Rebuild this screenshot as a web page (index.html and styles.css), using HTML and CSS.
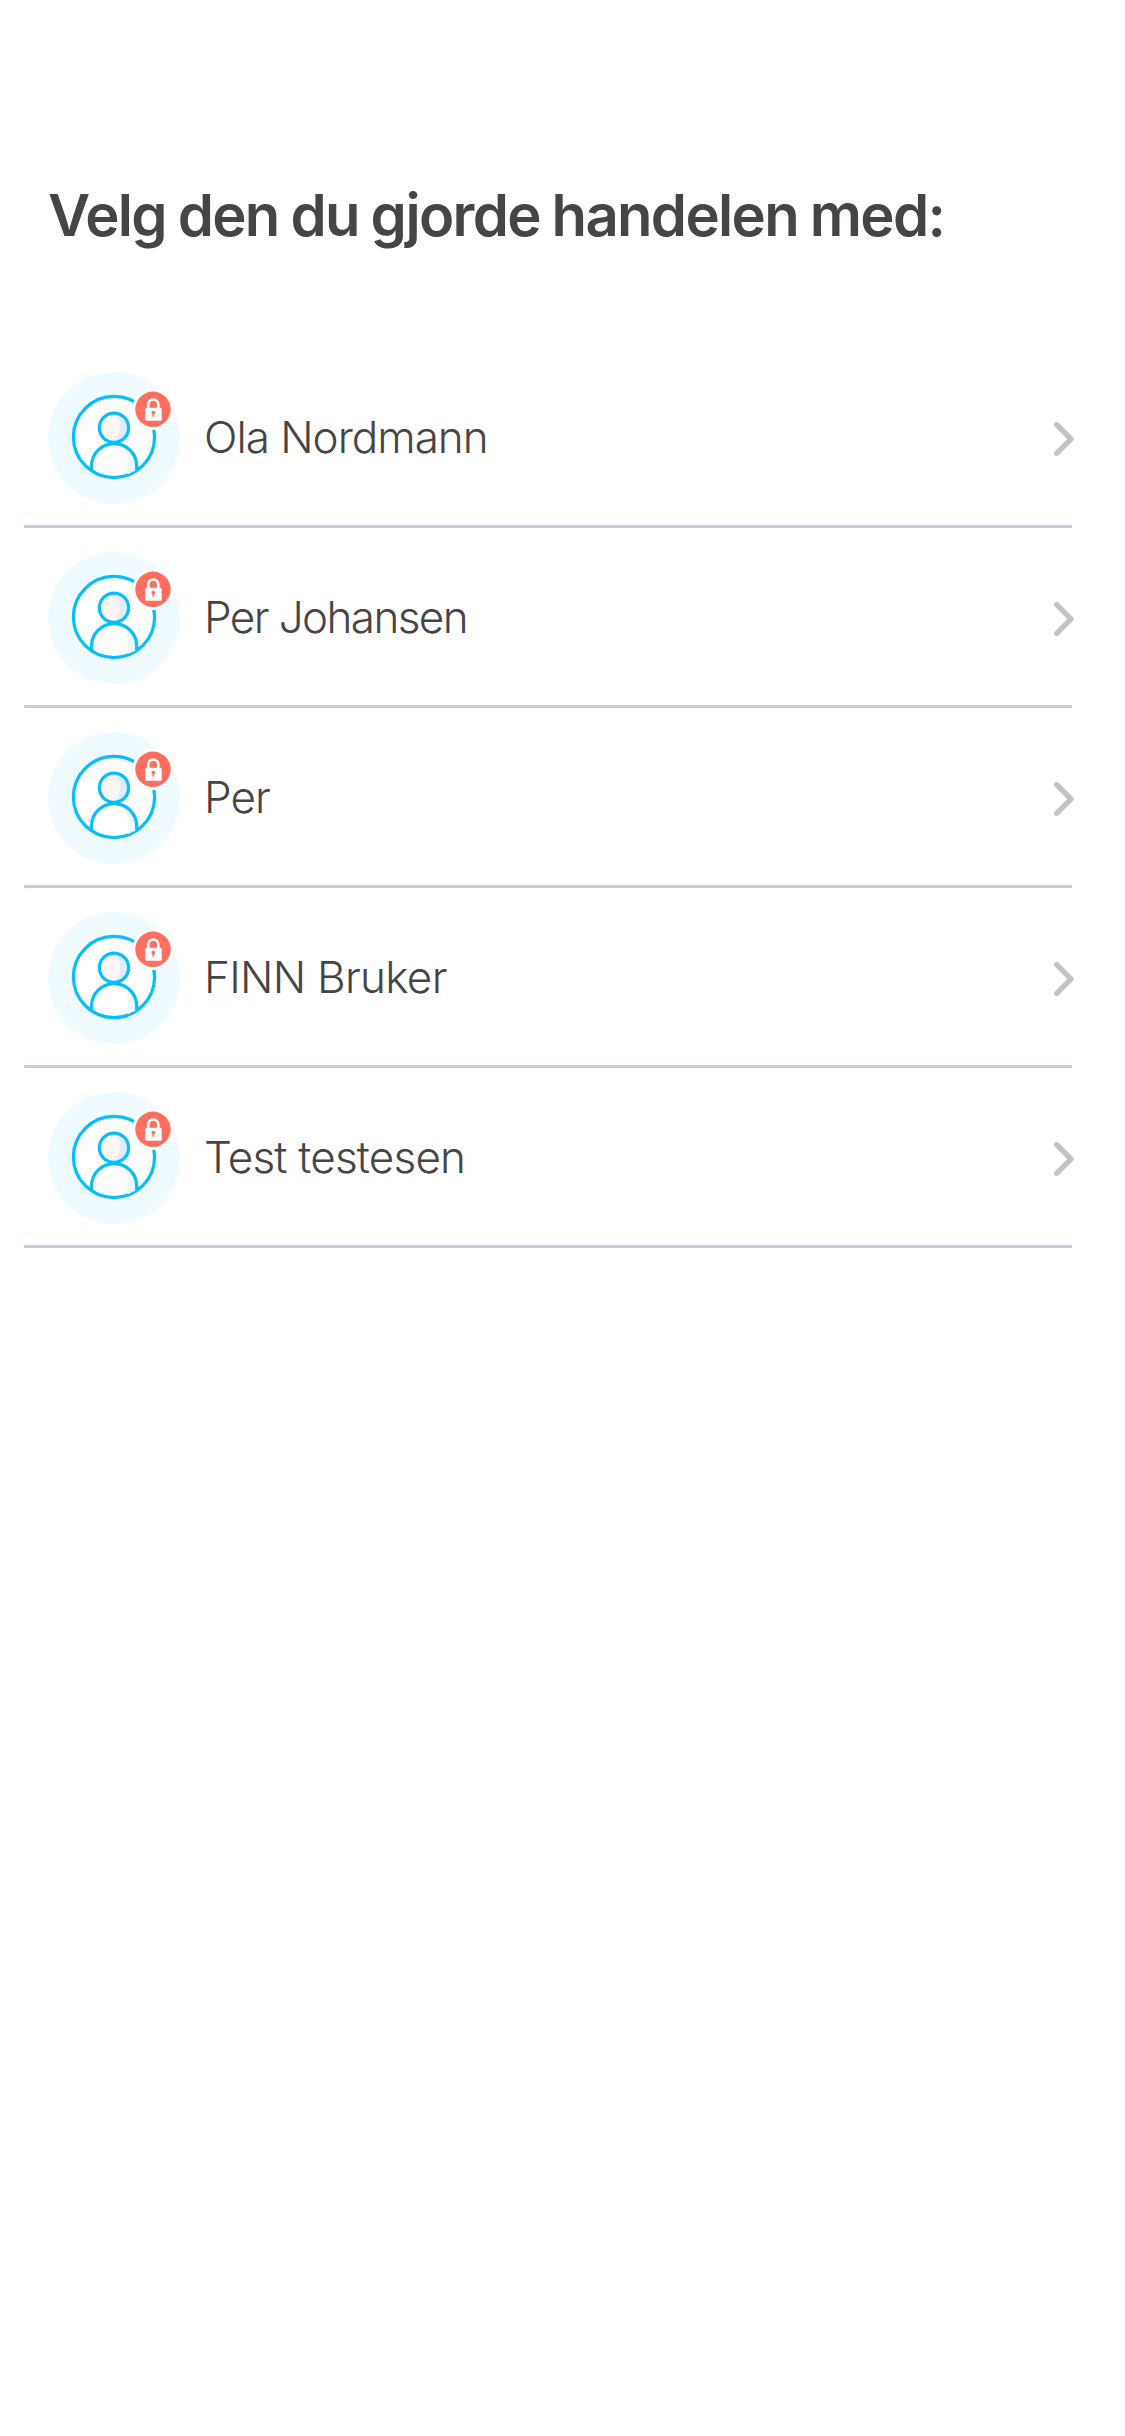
FILE: index.html
```html
<!DOCTYPE html>
<html lang="no">
<head>
<meta charset="utf-8">
<title>Velg kjøper</title>
<link rel="stylesheet" href="styles.css">
</head>
<body>
<svg class="sprite" aria-hidden="true">
  <symbol id="avatar" viewBox="0 0 132 132">
    <circle cx="66" cy="66" r="66" fill="#f0fbff"/>
    <circle cx="66" cy="65" r="40.6" fill="#fff" stroke="#06befb" stroke-width="3.2"/>
    <circle cx="66" cy="55.7" r="14.6" fill="#fff5f6"/>
    <path d="M66 41.1a14.6 14.6 0 0 1 0 29.2c8-6 8-23 0-29.2z" fill="#dfedf5"/>
    <path d="M68 71.8C85 74 88.7 86 88.7 98L80 102V94C80 83 77 76 68 71.8z" fill="#f0f9fe"/>
    <circle cx="66" cy="55.7" r="14.6" fill="none" stroke="#06befb" stroke-width="3.2"/>
    <path d="M43.5 98.5V94.2a22.5 22.5 0 0 1 45.2 0v4.3" fill="none" stroke="#06befb" stroke-width="3.2"/>
    <circle cx="105" cy="37.3" r="20.7" fill="#fff"/>
    <circle cx="105" cy="37.3" r="17.7" fill="#ff6e5e"/>
    <path d="M100.3 37v-4.5a5 5 0 0 1 10 0V37" fill="none" stroke="#fff" stroke-width="2.7"/>
    <rect x="97.2" y="35.7" width="16.5" height="13" rx="1.5" fill="#fff"/>
    <circle cx="105.3" cy="40.6" r="1.9" fill="#ff6e5e"/>
    <path d="M105.3 41v3.8" stroke="#ff6e5e" stroke-width="1.6"/>
  </symbol>
  <symbol id="chevron" viewBox="0 0 20 34">
    <path d="M2.7 2.7L17 17L2.7 31.3" fill="none" stroke="#c3c3c5" stroke-width="5.4" stroke-linecap="round" stroke-linejoin="round"/>
  </symbol>
</svg>
<main class="page">
  <h1 class="title">Velg den du gjorde handelen med:</h1>
  <ul class="list">
    <li class="row"><svg class="avatar"><use href="#avatar"/></svg><span class="name">Ola Nordmann</span><svg class="chevron"><use href="#chevron"/></svg></li>
    <li class="row"><svg class="avatar"><use href="#avatar"/></svg><span class="name name-johansen">Per Johansen</span><svg class="chevron"><use href="#chevron"/></svg></li>
    <li class="row"><svg class="avatar"><use href="#avatar"/></svg><span class="name">Per</span><svg class="chevron"><use href="#chevron"/></svg></li>
    <li class="row"><svg class="avatar"><use href="#avatar"/></svg><span class="name name-finn">FINN Bruker</span><svg class="chevron"><use href="#chevron"/></svg></li>
    <li class="row"><svg class="avatar"><use href="#avatar"/></svg><span class="name name-test">Test testesen</span><svg class="chevron"><use href="#chevron"/></svg></li>
  </ul>
</main>
</body>
</html>
```
FILE: styles.css
```css
* { box-sizing: border-box; }
body { margin: 0; background: #fff; color: #474445; font-family: Inter, "Liberation Sans", sans-serif; }
.sprite { display: block; width: 0; height: 0; }
.page { padding-top: 175px; min-height: 2436px; }
.title { margin: 0 0 93px 48px; font-size: 58px; font-weight: 560; line-height: 80px; letter-spacing: -1.67px; word-spacing: -1.2px; white-space: nowrap; }
.list { margin: 0 53px 0 24px; padding: 0; list-style: none; }
.row { display: flex; align-items: center; height: 180px; padding: 24px 0 21px 24px; border-bottom: 3px solid #c4cddb; }
.avatar { flex: none; width: 132px; height: 132px; }
.name { margin-left: 24px; padding-bottom: 2px; flex: 1; font-size: 44px; font-weight: 300; line-height: 60px; letter-spacing: -1px; white-space: nowrap; }
.name-johansen { letter-spacing: -1.6px; }
.name-finn { letter-spacing: -0.7px; }
.name-test { letter-spacing: -0.8px; }
.chevron { flex: none; width: 20px; height: 34px; margin-right: -2px; position: relative; top: 1px; }
```
